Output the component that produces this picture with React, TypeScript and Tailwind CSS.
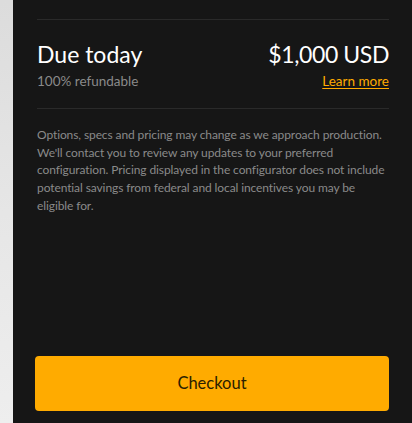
export default function App() {
  return (
    <div
      className="flex h-[423px] w-[412px] overflow-hidden"
      style={{ fontFamily: "Lato, 'Noto Sans', sans-serif" }}
    >
      <div className="w-[13px] shrink-0 bg-gradient-to-b from-[#dcdcdc] via-[#e6e6e6] to-[#eeeeee]" />
      <div className="flex flex-1 flex-col bg-[#161616] pl-[24px] pr-[23px]">
        <div className="mt-[19px] h-px bg-[#2a2a2a]" />
        <div className="flex items-start justify-between pt-[20px]">
          <div>
            <div className="text-[23px] leading-[28px] text-white">Due today</div>
            <div className="mt-[4px] text-[13.5px] leading-[18px] text-[#8a8a8a]">100% refundable</div>
          </div>
          <div className="flex flex-col items-end">
            <div className="text-[23px] leading-[28px] tracking-[-0.4px] text-white">$1,000 USD</div>
            <a href="#" className="mt-[4px] text-[13.5px] leading-[18px] text-[#ffab00] underline underline-offset-2">
              Learn more
            </a>
          </div>
        </div>
        <div className="mt-[18px] h-px bg-[#2a2a2a]" />
        <p className="mt-[17px] text-[12px] leading-[17.7px] tracking-[-0.1px] text-[#8a8a8a]">
          Options, specs and pricing may change as we approach production. We'll contact you to review any updates to your preferred configuration. Pricing displayed in the configurator does not include potential savings from federal and local incentives you may be eligible for.
        </p>
        <div className="flex-1" />
        <button className="-ml-[2px] mb-[12px] flex h-[55px] items-center justify-center rounded-[4px] bg-[#ffab00] text-[16.5px] text-[#2a1e00]">
          Checkout
        </button>
      </div>
    </div>
  );
}
